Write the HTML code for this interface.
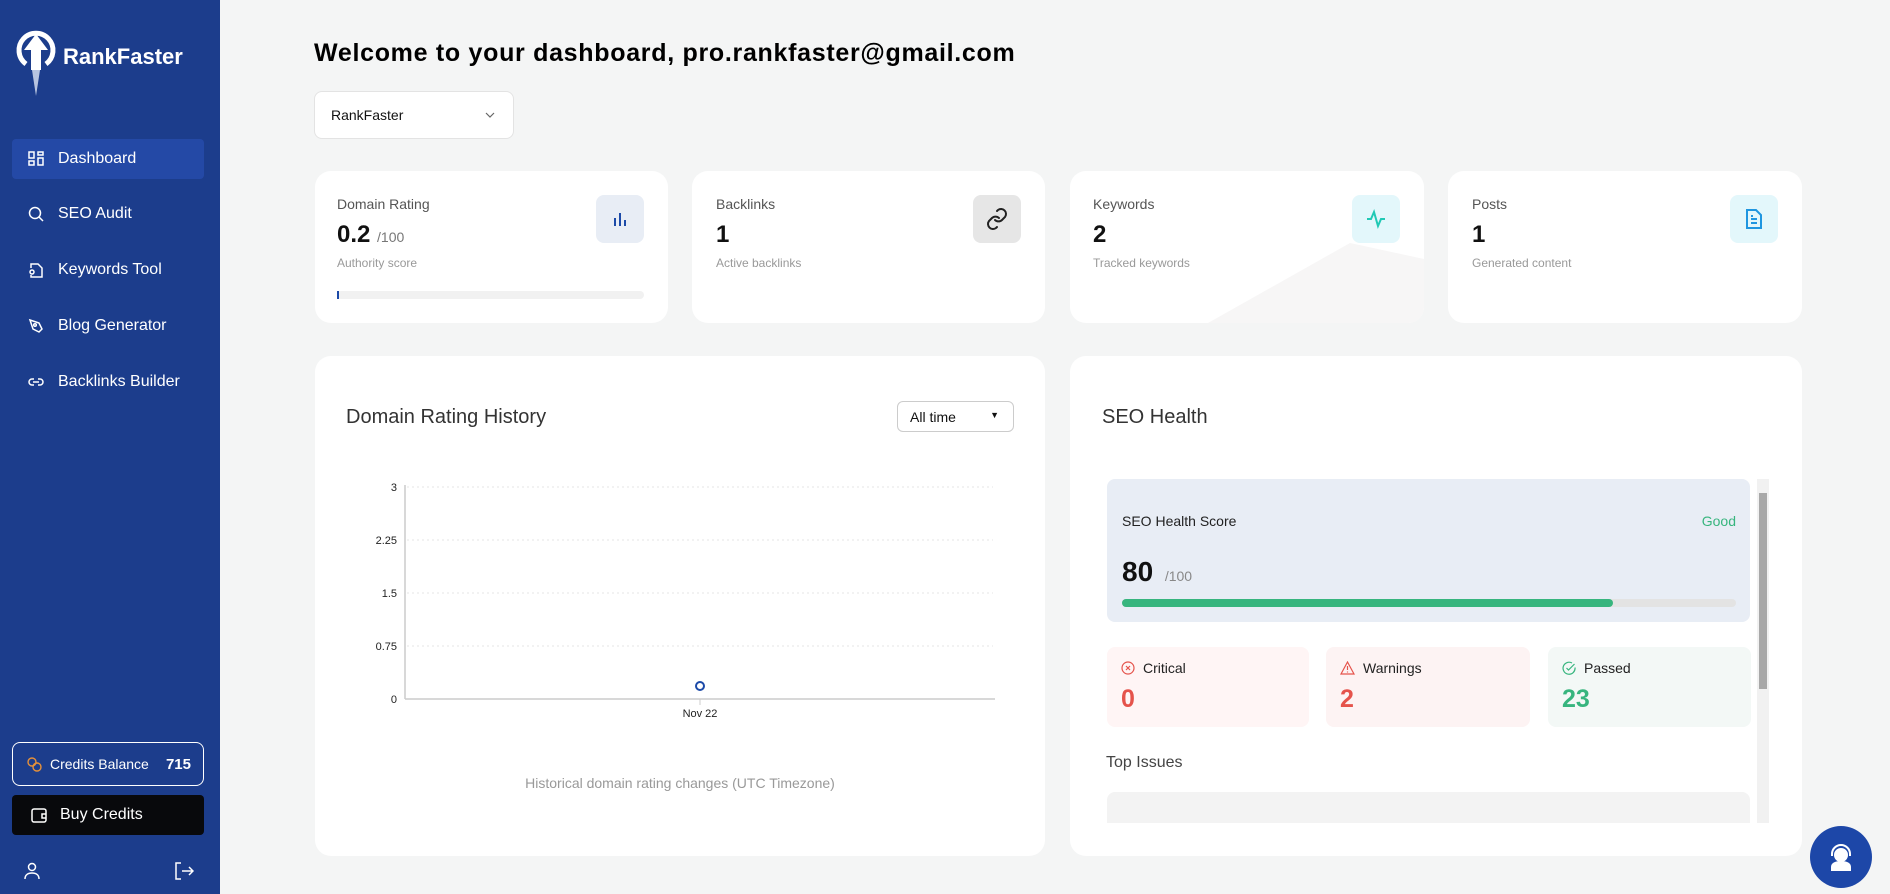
<!DOCTYPE html>
<html><head><meta charset="utf-8"><style>
*{box-sizing:border-box;margin:0;padding:0}
body{width:1890px;height:894px;overflow:hidden;background:#f4f5f5;font-family:"Liberation Sans",sans-serif;position:relative;color:#111}
.abs{position:absolute}
.side{left:0;top:0;width:220px;height:894px;background:#1c3d8c}
.nav{position:absolute;left:12px;width:192px;height:40px;color:#fff;font-size:16px;display:flex;align-items:center;padding-left:16px;border-radius:4px}
.nav svg{margin-right:14px}
.card{position:absolute;background:#fff;border-radius:16px;overflow:hidden}
.lbl{position:absolute;font-size:14px;color:#555}
.val{position:absolute;font-size:24px;font-weight:bold;color:#111}
.sub{position:absolute;font-size:12px;color:#999}
.ib{position:absolute;width:48px;height:48px;border-radius:8px;display:flex;align-items:center;justify-content:center}
.stat{position:absolute;top:647px;height:80px;border-radius:8px;width:202px}
.stat .t{position:absolute;left:14px;top:13px;font-size:14px;color:#222;display:flex;align-items:center}
.stat .t svg{margin-right:8px}
.stat .n{position:absolute;left:14px;top:38px;font-size:25px;font-weight:bold}
</style></head><body>
<div class="abs side"></div>
<svg class="abs" style="left:14px;top:30px" width="44" height="68" viewBox="0 0 44 68">
<path d="M12 34 A17 17 0 1 1 32 34" fill="none" stroke="#fff" stroke-width="5"/>
<path d="M22 4 L34 20 L27 20 L27 40 L17 40 L17 20 L10 20 Z" fill="#fff"/>
<path d="M18 40 L22 66 L26 40 Z" fill="#dfe6f5" opacity=".8"/>
</svg>
<div class="abs" style="left:63px;top:44px;color:#fff;font-weight:bold;font-size:22px">RankFaster</div>
<div class="nav" style="top:139px;background:#2449a6">
<svg width="16" height="16" viewBox="0 0 16 16" fill="none" stroke="#fff" stroke-width="1.5"><rect x="1" y="1" width="5" height="6"/><rect x="10" y="1" width="5" height="3"/><rect x="1" y="10" width="5" height="4"/><rect x="10" y="7" width="5" height="7"/></svg>Dashboard</div>
<div class="nav" style="top:194px"><svg width="16" height="16" viewBox="0 0 16 16" fill="none" stroke="#fff" stroke-width="1.5"><circle cx="7" cy="7" r="5.5"/><path d="M11 11l4 4"/></svg>SEO Audit</div>
<div class="nav" style="top:250px"><svg width="16" height="16" viewBox="0 0 16 16" fill="none" stroke="#fff" stroke-width="1.5"><path d="M3 6V2h7l4 4v9H3v-2"/><circle cx="4" cy="10" r="2"/></svg>Keywords Tool</div>
<div class="nav" style="top:306px"><svg width="16" height="16" viewBox="0 0 16 16" fill="none" stroke="#fff" stroke-width="1.5"><path d="M2 2l9 3 3 6-3 3-6-3z"/><circle cx="7" cy="7" r="1.3"/></svg>Blog Generator</div>
<div class="nav" style="top:362px"><svg width="16" height="16" viewBox="0 0 16 16" fill="none" stroke="#fff" stroke-width="1.5"><path d="M6 5H4a3 3 0 000 6h2M10 5h2a3 3 0 010 6h-2M5 8h6"/></svg>Backlinks Builder</div>
<div class="abs" style="left:12px;top:742px;width:192px;height:44px;border:1px solid #fff;border-radius:8px;color:#fff;font-size:14px;display:flex;align-items:center;padding-left:13px">
<svg width="16" height="16" viewBox="0 0 16 16" fill="none" stroke="#e6913a" stroke-width="1.4"><circle cx="6" cy="6" r="4"/><circle cx="11" cy="11" r="4"/></svg>
<span style="margin-left:8px">Credits Balance</span><span style="position:absolute;right:12px;font-weight:bold;font-size:15px">715</span></div>
<div class="abs" style="left:12px;top:795px;width:192px;height:40px;background:#08090c;border-radius:4px;color:#fff;font-size:16px;display:flex;align-items:center;padding-left:18px">
<svg width="18" height="18" viewBox="0 0 18 18" fill="none" stroke="#fff" stroke-width="1.5"><rect x="2" y="3" width="14" height="13" rx="2"/><path d="M16 8h-4v4h4"/></svg><span style="margin-left:12px">Buy Credits</span></div>
<svg class="abs" style="left:24px;top:862px" width="16" height="18" viewBox="0 0 16 18" fill="none" stroke="#fff" stroke-width="1.5"><circle cx="8" cy="5" r="3.5"/><path d="M1 17c0-4 3-6 7-6s7 2 7 6"/></svg>
<svg class="abs" style="left:174px;top:862px" width="20" height="18" viewBox="0 0 20 18" fill="none" stroke="#fff" stroke-width="1.5"><path d="M7 1H2v16h5M8 9h11M15 5l4 4-4 4"/></svg>

<div class="abs" style="left:314px;top:39px;font-size:25px;letter-spacing:0.7px;font-weight:bold;color:#000">Welcome to your dashboard, pro.rankfaster@gmail.com</div>
<div class="abs" style="left:314px;top:91px;width:200px;height:48px;background:#fff;border:1px solid #e3e3e3;border-radius:8px;font-size:14px;padding:15px 16px;color:#111">RankFaster
<svg style="position:absolute;right:18px;top:20px" width="10" height="6" viewBox="0 0 10 6" fill="none" stroke="#666" stroke-width="1.2"><path d="M1 1l4 4 4-4"/></svg></div>

<div class="card" style="left:315px;top:171px;width:353px;height:152px">
<div class="lbl" style="left:22px;top:25px">Domain Rating</div>
<div class="val" style="left:22px;top:50px">0.2 <span style="font-size:14px;font-weight:normal;color:#777">/100</span></div>
<div class="sub" style="left:22px;top:85px">Authority score</div>
<div class="ib" style="left:281px;top:24px;background:#e8edf5"><svg width="16" height="18" viewBox="0 0 16 18" stroke="#1c4aa8" stroke-width="2"><path d="M3 8v8M8 3v13M13 10v6"/></svg></div>
<div class="abs" style="left:22px;top:120px;width:307px;height:8px;background:#f1f1f1;border-radius:4px"><div style="width:2px;height:8px;background:#1c4aa8"></div></div>
</div>
<div class="card" style="left:692px;top:171px;width:353px;height:152px">
<div class="lbl" style="left:24px;top:25px">Backlinks</div>
<div class="val" style="left:24px;top:50px">1</div>
<div class="sub" style="left:24px;top:85px">Active backlinks</div>
<div class="ib" style="left:281px;top:24px;background:#e6e6e6"><svg width="24" height="24" viewBox="0 0 24 24" fill="none" stroke="#222" stroke-width="2" stroke-linecap="round"><path d="M10 13a5 5 0 007 0l3-3a5 5 0 00-7-7l-1 1"/><path d="M14 11a5 5 0 00-7 0l-3 3a5 5 0 007 7l1-1"/></svg></div>
</div>
<div class="card" style="left:1070px;top:171px;width:354px;height:152px">
<svg class="abs" style="left:0;top:0" width="354" height="152"><polygon points="138,152 280,72 354,88 354,152" fill="#f7f6f6"/></svg>
<div class="lbl" style="left:23px;top:25px">Keywords</div>
<div class="val" style="left:23px;top:50px">2</div>
<div class="sub" style="left:23px;top:85px">Tracked keywords</div>
<div class="ib" style="left:282px;top:24px;background:#e3f7fb"><svg width="20" height="20" viewBox="0 0 20 20" fill="none" stroke="#21c9b5" stroke-width="2"><path d="M1 10h4l3-7 4 14 3-7h4"/></svg></div>
</div>
<div class="card" style="left:1448px;top:171px;width:354px;height:152px">
<div class="lbl" style="left:24px;top:25px">Posts</div>
<div class="val" style="left:24px;top:50px">1</div>
<div class="sub" style="left:24px;top:85px">Generated content</div>
<div class="ib" style="left:282px;top:24px;background:#e3f7fb"><svg width="18" height="22" viewBox="0 0 18 22" fill="none" stroke="#1f96e0" stroke-width="2"><path d="M2 2h9l5 5v13H2z"/><path d="M6 11h6M6 15h6M6 8h2"/></svg></div>
</div>

<div class="card" style="left:315px;top:356px;width:730px;height:500px">
<div class="abs" style="left:31px;top:50px;font-size:20px;color:#333">Domain Rating History</div>
<div class="abs" style="left:582px;top:45px;width:117px;height:31px;border:1px solid #ccc;border-radius:6px;font-size:14px;padding:7px 12px;color:#111">All time<span style="position:absolute;right:14px;top:8px;font-size:9px">▼</span></div>
<svg class="abs" style="left:0;top:0" width="730" height="500">
<g stroke="#e6e6e6" stroke-dasharray="2 3"><line x1="92" y1="131" x2="678" y2="131"/><line x1="92" y1="184" x2="678" y2="184"/><line x1="92" y1="237" x2="678" y2="237"/><line x1="92" y1="290" x2="678" y2="290"/></g>
<line x1="90" y1="129" x2="90" y2="343" stroke="#ccc" stroke-width="1.5"/>
<line x1="90" y1="343" x2="680" y2="343" stroke="#ccc" stroke-width="1.5"/>
<line x1="385" y1="343" x2="385" y2="349" stroke="#ccc"/>
<g font-size="11" fill="#222" text-anchor="end" font-family="Liberation Sans"><text x="82" y="135">3</text><text x="82" y="188">2.25</text><text x="82" y="241">1.5</text><text x="82" y="294">0.75</text><text x="82" y="347">0</text></g>
<text x="385" y="361" font-size="11" fill="#222" text-anchor="middle" font-family="Liberation Sans">Nov 22</text>
<circle cx="385" cy="330" r="4" fill="#fff" stroke="#1c4aa8" stroke-width="2"/>
<text x="365" y="432" font-size="14" fill="#999" text-anchor="middle" font-family="Liberation Sans">Historical domain rating changes (UTC Timezone)</text>
</svg>
</div>

<div class="card" style="left:1070px;top:356px;width:732px;height:500px">
<div class="abs" style="left:32px;top:50px;font-size:20px;color:#333">SEO Health</div>
</div>
<div class="abs" style="left:1107px;top:479px;width:643px;height:143px;background:#e8edf5;border-radius:8px">
<div class="abs" style="left:15px;top:34px;font-size:14px;color:#222">SEO Health Score</div>
<div class="abs" style="right:14px;top:34px;font-size:14px;color:#37b57e">Good</div>
<div class="abs" style="left:15px;top:77px;font-size:28px;font-weight:bold;color:#111">80 <span style="font-size:14px;font-weight:normal;color:#888">&nbsp;/100</span></div>
<div class="abs" style="left:15px;top:120px;width:614px;height:8px;background:#e3e3e3;border-radius:4px"><div style="width:491px;height:8px;background:#37b57e;border-radius:4px"></div></div>
</div>
<div class="stat" style="left:1107px;background:#fff5f5"><div class="t"><svg width="14" height="14" viewBox="0 0 14 14" fill="none" stroke="#e5534b" stroke-width="1.2"><circle cx="7" cy="7" r="6"/><path d="M5 5l4 4M9 5l-4 4"/></svg>Critical</div><div class="n" style="color:#e5534b">0</div></div>
<div class="stat" style="left:1326px;width:204px;background:#fdf3f3"><div class="t"><svg width="15" height="14" viewBox="0 0 15 14" fill="none" stroke="#e5534b" stroke-width="1.2"><path d="M7.5 1L14 13H1z"/><path d="M7.5 5v4M7.5 10.5v1"/></svg>Warnings</div><div class="n" style="color:#e5534b">2</div></div>
<div class="stat" style="left:1548px;width:203px;background:#f3f8f6"><div class="t"><svg width="14" height="14" viewBox="0 0 14 14" fill="none" stroke="#37b57e" stroke-width="1.2"><path d="M13 6.5A6 6 0 1 1 10 2"/><path d="M4.5 7l2 2 6-6"/></svg>Passed</div><div class="n" style="color:#37b57e">23</div></div>
<div class="abs" style="left:1106px;top:754px;font-size:16px;color:#444">Top Issues</div>
<div class="abs" style="left:1107px;top:792px;width:643px;height:31px;background:#f3f3f3;border-radius:8px 8px 0 0"></div>
<div class="abs" style="left:1757px;top:479px;width:12px;height:344px;background:#f1f1f1">
<div style="position:absolute;left:2px;top:14px;width:8px;height:196px;background:#a8a8a8"></div></div>

<div class="abs" style="left:1810px;top:826px;width:62px;height:62px;border-radius:50%;background:#1d47a8"></div>
<svg class="abs" style="left:1827px;top:842px" width="28" height="30" viewBox="0 0 28 30" fill="none" stroke="#fff" stroke-width="2"><path d="M5 14v-2a9 9 0 0118 0v2"/><circle cx="14" cy="13" r="6" fill="#fff"/><path d="M4 29v-4c0-4 4-6 10-6s10 2 10 6v4z" fill="#fff" stroke="none"/></svg>
</body></html>
